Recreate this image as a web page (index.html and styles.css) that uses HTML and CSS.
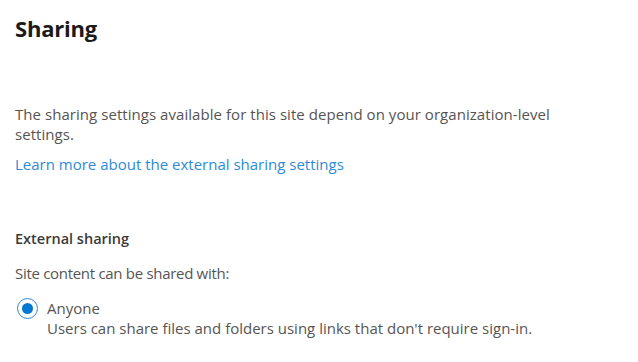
FILE: index.html
```html
<!DOCTYPE html>
<html lang="en">
<head>
    <meta charset="UTF-8">
    <title>Sharing</title>
    <link rel="stylesheet" href="styles.css">
</head>
<body>
    <div class="panel">
        <h1 class="panel-title">Sharing</h1>

        <p class="intro">The sharing settings available for this site depend on your organization-level settings.</p>
        <a class="learn-link" href="#">Learn more about the external sharing settings</a>

        <h2 class="section-title">External sharing</h2>
        <div class="field-label">Site content can be shared with:</div>

        <label class="choice">
            <span class="radio checked"><span class="radio-dot"></span></span>
            <span class="choice-text">
                <span class="choice-name">Anyone</span>
                <span class="choice-desc">Users can share files and folders using links that don't require sign-in.</span>
            </span>
        </label>
    </div>
</body>
</html>
```

FILE: styles.css
```css
* {
    margin: 0;
    padding: 0;
    box-sizing: border-box;
}

body {
    font-family: 'Open Sans', 'Segoe UI', sans-serif;
    background: #ffffff;
    color: #565554;
    font-size: 15px;
}

.panel {
    padding: 13px 15px;
}

.panel-title {
    font-size: 22px;
    font-weight: 700;
    color: #1b1a19;
    line-height: 30px;
    letter-spacing: -0.2px;
}

.intro {
    margin-top: 61px;
    line-height: 20px;
    max-width: 560px;
    letter-spacing: 0.05px;
}

.learn-link {
    display: block;
    margin-top: 10px;
    color: #2f8ad8;
    text-decoration: none;
    line-height: 20px;
}

.section-title {
    margin-top: 55px;
    font-size: 14.5px;
    font-weight: 600;
    color: #3b3a39;
    line-height: 20px;
}

.field-label {
    margin-top: 14px;
    line-height: 20px;
    letter-spacing: -0.3px;
}

.choice {
    display: flex;
    gap: 9px;
    margin-top: 15px;
}

.radio {
    flex: none;
    width: 21px;
    height: 21px;
    border: 1px solid #2b88d8;
    border-radius: 50%;
    display: flex;
    align-items: center;
    justify-content: center;
    margin-left: 2px;
}

.radio-dot {
    width: 11px;
    height: 11px;
    border-radius: 50%;
    background: #0078d4;
}

.choice-text {
    display: flex;
    flex-direction: column;
    line-height: 20px;
}
```
